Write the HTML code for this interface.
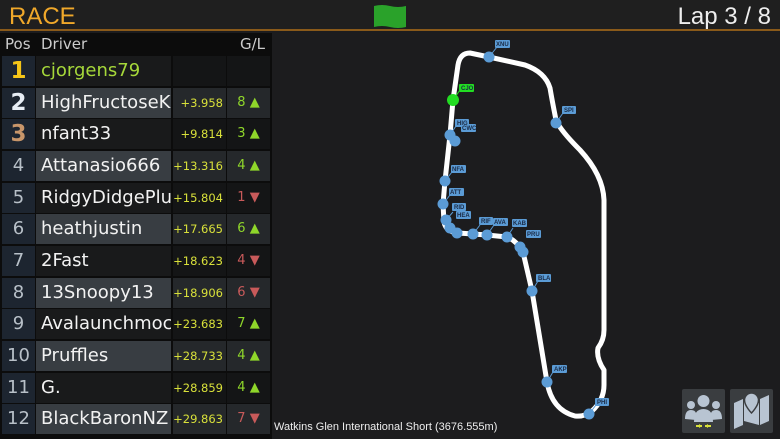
<!DOCTYPE html>
<html><head><meta charset="utf-8"><style>
*{margin:0;padding:0;box-sizing:border-box}
body{width:780px;height:439px;background:#1c1c1e;font-family:"Liberation Sans","DejaVu Sans",sans-serif;position:relative;overflow:hidden}
.hdr{position:absolute;left:0;top:0;width:780px;height:31px;background:#1f1f1f;border-bottom:2px solid #8a5a1a}
.race{position:absolute;left:9px;top:3px;font-size:24px;color:#f0a82a}
.lap{position:absolute;right:9px;top:3px;font-size:24px;color:#eee}
.flag{position:absolute;left:373px;top:4px;width:34px;height:25px}
.tbl{position:absolute;left:0;top:33px;width:272px;height:406px;background:#0c0c0c;font-family:"DejaVu Sans",sans-serif}
.th{position:absolute;top:2px;font-size:15px;color:#ccc}
.row{position:absolute;left:2px;height:30px;width:268px}
.row div{position:absolute;top:0;height:30px;line-height:30px;white-space:nowrap;overflow:hidden}
.p{left:0;width:33px;background:#1d2530;text-align:center;font-size:18px;color:#b8c0c8}
.d{left:34px;width:135px;padding-left:5px;font-size:18px;color:#f2f2f2}
.g{left:171px;width:53px;text-align:right;padding-right:3px;font-size:11.5px;color:#d8e03a}
.l{left:225px;width:43px;text-align:center;font-size:13px}
.e .d{background:#383d42}.e .g,.e .l{background:#25282b}
.o .d{background:#191a1b}.o .g,.o .l{background:#141516}
.up{color:#8fd62a}.dn{color:#c85a5a}
.cap{position:absolute;left:274px;top:421px;font-size:11px;color:#eee}
.btn{position:absolute;top:389px;width:43px;height:44px;background:#3a3d40;border-radius:2px}
</style></head><body>
<div class="hdr"><div class="race">RACE</div><svg class="flag" viewBox="0 0 34 25"><path d="M1 2Q9 0 17 2Q25 4 33 2L33 23Q25 25 17 23Q9 21 1 23Z" fill="#2aa22a"/></svg><div class="lap">Lap 3 / 8</div></div>
<div class="tbl">
<div class="th" style="left:5px">Pos</div><div class="th" style="left:41px">Driver</div><div class="th" style="left:240px">G/L</div>
<div class="row o" style="top:23px"><div class="p" style="color:#f5c518;font-size:23px;font-weight:bold">1</div><div class="d" style="color:#a6d83a">cjorgens79</div><div class="g"></div><div class="l"></div></div>
<div class="row e" style="top:55px"><div class="p" style="color:#e8eef5;font-size:23px;font-weight:bold">2</div><div class="d">HighFructoseK</div><div class="g">+3.958</div><div class="l up">8 ▲</div></div>
<div class="row o" style="top:86px"><div class="p" style="color:#c8966a;font-size:23px;font-weight:bold">3</div><div class="d">nfant33</div><div class="g">+9.814</div><div class="l up">3 ▲</div></div>
<div class="row e" style="top:118px"><div class="p">4</div><div class="d">Attanasio666</div><div class="g">+13.316</div><div class="l up">4 ▲</div></div>
<div class="row o" style="top:150px"><div class="p">5</div><div class="d">RidgyDidgePlu</div><div class="g">+15.804</div><div class="l dn">1 ▼</div></div>
<div class="row e" style="top:181px"><div class="p">6</div><div class="d">heathjustin</div><div class="g">+17.665</div><div class="l up">6 ▲</div></div>
<div class="row o" style="top:213px"><div class="p">7</div><div class="d">2Fast</div><div class="g">+18.623</div><div class="l dn">4 ▼</div></div>
<div class="row e" style="top:245px"><div class="p">8</div><div class="d">13Snoopy13</div><div class="g">+18.906</div><div class="l dn">6 ▼</div></div>
<div class="row o" style="top:276px"><div class="p">9</div><div class="d">Avalaunchmoc</div><div class="g">+23.683</div><div class="l up">7 ▲</div></div>
<div class="row e" style="top:308px"><div class="p">10</div><div class="d">Pruffles</div><div class="g">+28.733</div><div class="l up">4 ▲</div></div>
<div class="row o" style="top:340px"><div class="p">11</div><div class="d">G.</div><div class="g">+28.859</div><div class="l up">4 ▲</div></div>
<div class="row e" style="top:371px"><div class="p">12</div><div class="d">BlackBaronNZ</div><div class="g">+29.863</div><div class="l dn">7 ▼</div></div>
</div>
<svg width="780" height="439" style="position:absolute;left:0;top:0">
<path d="M470 53 Q460 53 458 65 L453 100 L450 135 L445 181 L443 204 L444 222 Q446 232 458 233 L473 234 L487 235 L507 237 Q516 240 523 252 L532 291 L547 382 Q552 410 575 416 Q585 417 592 411 Q604 400 604 385 L604 370 Q596 358 598 348 Q604 340 604 330 L604 200 Q603 175 580 150 Q560 130 556 120 Q552 100 550 88 Q545 72 525 65 L489 57 Z" fill="none" stroke="#fff" stroke-width="5" stroke-linejoin="round"/>
<g fill="#5b9bd5">
<circle cx="489" cy="57" r="5.5"/><circle cx="556" cy="123" r="5.5"/><circle cx="450" cy="135" r="5.5"/><circle cx="455" cy="141" r="5.5"/>
<circle cx="445" cy="181" r="5.5"/><circle cx="443" cy="204" r="5.5"/><circle cx="446" cy="220" r="5.5"/><circle cx="450" cy="228" r="5.5"/><circle cx="457" cy="233" r="5.5"/>
<circle cx="473" cy="234" r="5.5"/><circle cx="487" cy="235" r="5.5"/><circle cx="507" cy="237" r="5.5"/><circle cx="520" cy="247" r="5.5"/><circle cx="523" cy="252" r="5.5"/>
<circle cx="532" cy="291" r="5.5"/><circle cx="547" cy="382" r="5.5"/><circle cx="589" cy="414" r="5.5"/>
</g>
<circle cx="453" cy="100" r="6" fill="#22dd22"/>
<g stroke="#5b9bd5" stroke-width="1"><path d="M489 57L497 47M556 123L563 113M445 181L452 172M443 204L450 195M446 220L453 212M473 234L480 225M487 235L494 225M507 237L513 228M532 291L538 281M547 382L553 372M589 414L596 405M450 135L456 126"/></g>
<path d="M453 100L460 90" stroke="#22dd22"/>
<g font-size="6" font-family="Liberation Sans" font-weight="bold">
<g fill="#5b9bd5"><rect x="495" y="40" width="15" height="8" rx="1"/><rect x="562" y="106" width="14" height="8" rx="1"/><rect x="455" y="119" width="14" height="8" rx="1"/><rect x="461" y="124" width="15" height="8" rx="1"/><rect x="451" y="165" width="15" height="8" rx="1"/><rect x="449" y="188" width="15" height="8" rx="1"/><rect x="452" y="203" width="14" height="8" rx="1"/><rect x="456" y="211" width="15" height="8" rx="1"/><rect x="479" y="217" width="14" height="8" rx="1"/><rect x="493" y="218" width="15" height="8" rx="1"/><rect x="512" y="219" width="15" height="8" rx="1"/><rect x="526" y="230" width="15" height="8" rx="1"/><rect x="536" y="274" width="15" height="8" rx="1"/><rect x="552" y="365" width="15" height="8" rx="1"/><rect x="595" y="398" width="14" height="8" rx="1"/></g>
<rect x="459" y="84" width="15" height="8" rx="1" fill="#22dd22"/>
<g fill="#1a2a44"><text x="496" y="46">XNU</text><text x="564" y="112">SPI</text><text x="457" y="125">HIG</text><text x="462" y="130">CWC</text><text x="452" y="171">NFA</text><text x="450" y="194">ATT</text><text x="454" y="209">RID</text><text x="457" y="217">HEA</text><text x="481" y="223">RIF</text><text x="494" y="224">AVA</text><text x="513" y="225">KAB</text><text x="527" y="236">PRU</text><text x="538" y="280">BLA</text><text x="554" y="371">AKP</text><text x="597" y="404">PHI</text><text x="461" y="90">CJO</text></g>
</g>
</svg>
<div class="cap">Watkins Glen International Short (3676.555m)</div>
<div class="btn" style="left:682px"><svg width="43" height="44"><g fill="#b8c4d2"><circle cx="9" cy="16" r="4"/><circle cx="34" cy="16" r="4"/><circle cx="21.5" cy="12" r="6"/><path d="M3 30Q3 21 9 21Q13 21 14 24L14 31Z M29 24Q30 21 34 21Q40 21 40 30L29 31Z M12 33Q12 20 21.5 20Q31 20 31 33Z"/></g><path d="M14 37h6M23 37h6" stroke="#d8e03a" stroke-width="2"/><path d="M20 37l-3-2v4zM23 37l3-2v4z" fill="#d8e03a"/></svg></div>
<div class="btn" style="left:730px"><svg width="43" height="44"><path d="M4 14L13 10V36L4 40Z M30 10L39 6V32L30 36Z M14 10L29 14V36L14 32Z" fill="#b8c4d2"/><path d="M21.5 4a7 7 0 0 1 7 7c0 6-7 13-7 13s-7-7-7-13a7 7 0 0 1 7-7z" fill="#b8c4d2" stroke="#3a3d40" stroke-width="1.5"/></svg></div>
</body></html>
